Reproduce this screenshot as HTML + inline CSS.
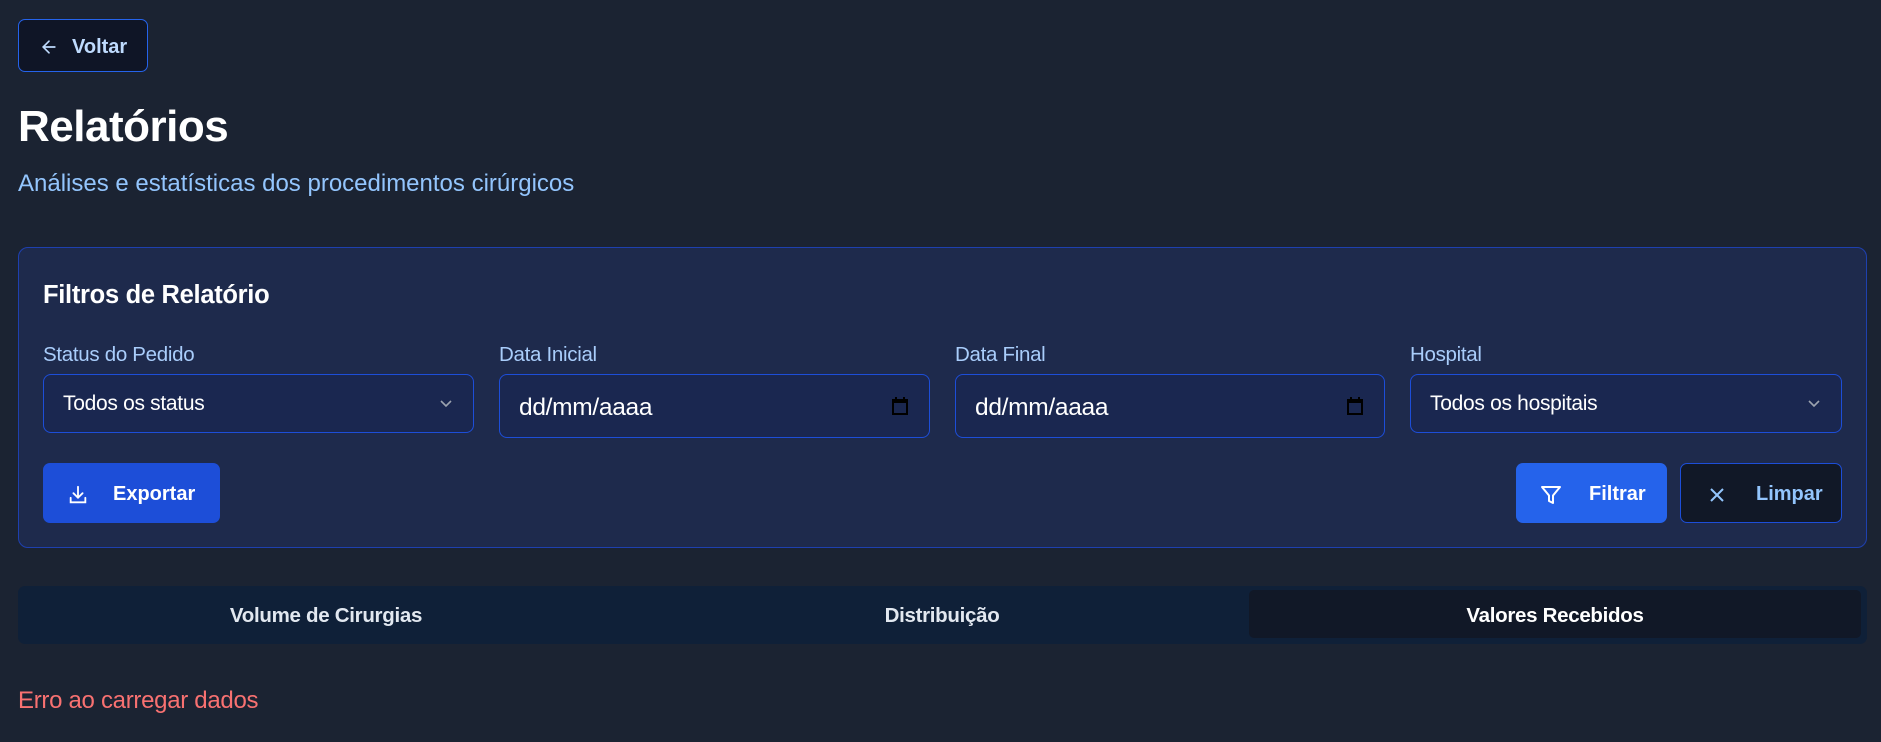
<!DOCTYPE html>
<html><head><meta charset="utf-8"><style>
*{box-sizing:border-box;margin:0;padding:0}
body{width:1881px;height:742px;background:#1b2332;font-family:"Liberation Sans",sans-serif;position:relative;overflow:hidden;color:#fff}
.a{position:absolute}
.btn{position:absolute;display:flex;align-items:center;border-radius:7px;font-weight:bold;font-size:20px;padding-top:3px}
.lbl{position:absolute;top:343px;font-size:20.5px;color:#a9cdfb;letter-spacing:-0.3px}
.inp{position:absolute;top:374px;border:1.5px solid #1d4ed8;border-radius:8px;background:#1a2750;display:flex;align-items:center;padding-left:19px;font-size:21px;color:#fff;letter-spacing:-0.3px}
.chev{position:absolute;right:20px;top:50%;margin-top:-6px}
.cal{position:absolute;right:20px;top:50%;margin-top:-10px}
</style></head><body>
<div class="btn" style="left:18px;top:19px;width:130px;height:53px;border:1.5px solid #2563eb;background:#0f1526;color:#bfdbfe;padding-left:20px">
<svg width="20" height="20" viewBox="0 0 24 24" fill="none" stroke="#bfdbfe" stroke-width="2" stroke-linecap="round"><path d="M19 12H5M12 5l-7 7 7 7"/></svg>
<span style="margin-left:13px">Voltar</span></div>
<div class="a" style="left:18px;top:102px;font-size:44px;font-weight:bold;letter-spacing:-0.5px">Relatórios</div>
<div class="a" style="left:18px;top:170px;font-size:24px;color:#93c5fd;letter-spacing:0px">Análises e estatísticas dos procedimentos cirúrgicos</div>
<div class="a" style="left:18px;top:247px;width:1849px;height:301px;background:#1e2a4c;border:1.5px solid #1e40af;border-radius:10px"></div>
<div class="a" style="left:43px;top:281px;font-size:25.5px;font-weight:bold;letter-spacing:-0.3px">Filtros de Relatório</div>
<div class="lbl" style="left:43px">Status do Pedido</div>
<div class="lbl" style="left:499px">Data Inicial</div>
<div class="lbl" style="left:955px">Data Final</div>
<div class="lbl" style="left:1410px">Hospital</div>
<div class="inp" style="left:43px;width:431px;height:59px">Todos os status<svg class="chev" width="14" height="12" viewBox="0 0 14 12" fill="none" stroke="#9ca3af" stroke-width="1.6"><path d="M2 3l5 5 5-5"/></svg></div>
<div class="inp" style="left:499px;width:431px;height:64px;font-size:24.5px;padding-top:3px">dd/mm/aaaa<svg class="cal" width="18" height="20" viewBox="0 0 18 20"><rect x="2" y="4" width="14" height="14" fill="none" stroke="#000" stroke-width="2"/><rect x="2" y="4" width="14" height="3" fill="#000"/><rect x="4" y="1" width="2" height="4" fill="#000"/><rect x="12" y="1" width="2" height="4" fill="#000"/></svg></div>
<div class="inp" style="left:955px;width:430px;height:64px;font-size:24.5px;padding-top:3px">dd/mm/aaaa<svg class="cal" width="18" height="20" viewBox="0 0 18 20"><rect x="2" y="4" width="14" height="14" fill="none" stroke="#000" stroke-width="2"/><rect x="2" y="4" width="14" height="3" fill="#000"/><rect x="4" y="1" width="2" height="4" fill="#000"/><rect x="12" y="1" width="2" height="4" fill="#000"/></svg></div>
<div class="inp" style="left:1410px;width:432px;height:59px">Todos os hospitais<svg class="chev" width="14" height="12" viewBox="0 0 14 12" fill="none" stroke="#9ca3af" stroke-width="1.6"><path d="M2 3l5 5 5-5"/></svg></div>
<div class="btn" style="left:43px;top:463px;width:177px;height:60px;background:#1d4ed8;padding-left:24px">
<svg width="22" height="22" viewBox="0 0 24 24" fill="none" stroke="#fff" stroke-width="2" stroke-linecap="round"><path d="M12 3v12M7 10l5 5 5-5M4 15v5h16v-5"/></svg><span style="margin-left:24px">Exportar</span></div>
<div class="btn" style="left:1516px;top:463px;width:151px;height:60px;background:#2563eb;padding-left:23px">
<svg width="24" height="24" viewBox="0 0 24 24" fill="none" stroke="#fff" stroke-width="2" stroke-linejoin="round"><path d="M3 4h18l-7 8.5V20l-4-2v-5.5z"/></svg><span style="margin-left:26px">Filtrar</span></div>
<div class="btn" style="left:1680px;top:463px;width:162px;height:60px;background:#111827;border:1.5px solid #1d4ed8;color:#93c5fd;padding-left:27px">
<svg width="18" height="18" viewBox="0 0 18 18" fill="none" stroke="#93c5fd" stroke-width="2"><path d="M3 3l12 12M15 3L3 15"/></svg><span style="margin-left:30px">Limpar</span></div>
<div class="a" style="left:18px;top:586px;width:1849px;height:58px;background:#0f2038;border-radius:7px"></div>
<div class="a" style="left:1249px;top:590px;width:612px;height:48px;background:#111827;border-radius:5px"></div>
<div class="a" style="left:18px;top:604px;width:616px;text-align:center;font-size:20.5px;font-weight:bold;color:#e2e8f0;letter-spacing:-0.3px">Volume de Cirurgias</div>
<div class="a" style="left:634px;top:604px;width:616px;text-align:center;font-size:20.5px;font-weight:bold;color:#e2e8f0;letter-spacing:-0.3px">Distribuição</div>
<div class="a" style="left:1249px;top:604px;width:612px;text-align:center;font-size:20.5px;font-weight:bold;color:#fff;letter-spacing:-0.3px">Valores Recebidos</div>
<div class="a" style="left:18px;top:687px;font-size:24px;color:#f87171;letter-spacing:-0.3px">Erro ao carregar dados</div>
</body></html>
